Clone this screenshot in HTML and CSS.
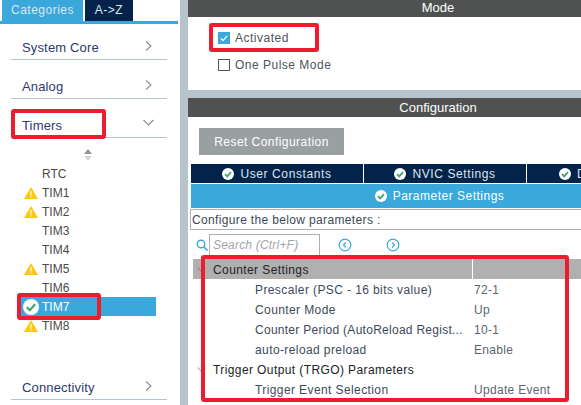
FILE: index.html
```html
<!DOCTYPE html>
<html lang="en">
<head>
    <meta charset="UTF-8">
    <title>Timers</title>
    <link rel="stylesheet" href="styles.css">
</head>
<body>
    <div class="app">
        <div class="sidebar">
            <div class="tabs">
                <div class="tab tab-active">Categories</div>
                <div class="tab">A-&gt;Z</div>
            </div>
            <div class="category cat-first">System Core
                <svg class="chev" width="7" height="10" viewBox="0 0 7 10"><path d="M1 .5l5 4.500-5 4.500" fill="none" stroke="#8a8f93" stroke-width="1.100"/></svg>
            </div>
            <div class="category">Analog
                <svg class="chev" width="7" height="10" viewBox="0 0 7 10"><path d="M1 .5l5 4.500-5 4.500" fill="none" stroke="#8a8f93" stroke-width="1.100"/></svg>
            </div>
            <div class="category">Timers
                <svg class="chev-down" width="11" height="7" viewBox="0 0 11 7"><path d="M.5 1l5 5 5-5" fill="none" stroke="#8a8f93" stroke-width="1.100"/></svg>
            </div>
            <div class="sort">
                <svg width="8" height="12" viewBox="0 0 8 12"><path d="M4 0l4 5H0z" fill="#8f9396"/><path d="M4 12L0 7h8z" fill="#d4d6d8"/></svg>
            </div>
            <ul class="timers">
                <li><span class="ico"></span>RTC</li>
                <li><span class="ico"><svg width="14" height="12" viewBox="0 0 14 12"><path d="M7 0l7 12H0z" fill="#fdc70c"/><path d="M6.400 4h1.200v4.400H6.400zM6.400 9.300h1.200v1.200H6.400z" fill="#fff"/></svg></span>TIM1</li>
                <li><span class="ico"><svg width="14" height="12" viewBox="0 0 14 12"><path d="M7 0l7 12H0z" fill="#fdc70c"/><path d="M6.400 4h1.200v4.400H6.400zM6.400 9.300h1.200v1.200H6.400z" fill="#fff"/></svg></span>TIM2</li>
                <li><span class="ico"></span>TIM3</li>
                <li><span class="ico"></span>TIM4</li>
                <li><span class="ico"><svg width="14" height="12" viewBox="0 0 14 12"><path d="M7 0l7 12H0z" fill="#fdc70c"/><path d="M6.400 4h1.200v4.400H6.400zM6.400 9.300h1.200v1.200H6.400z" fill="#fff"/></svg></span>TIM5</li>
                <li><span class="ico"></span>TIM6</li>
                <li class="selected"><span class="ico"><svg width="16" height="16" viewBox="0 0 16 16"><circle cx="8" cy="8" r="8" fill="#fff"/><path d="M3.800 8.200l3 3 5.400-6" fill="none" stroke="#3fa66e" stroke-width="2.200"/></svg></span>TIM7</li>
                <li><span class="ico"><svg width="14" height="12" viewBox="0 0 14 12"><path d="M7 0l7 12H0z" fill="#fdc70c"/><path d="M6.400 4h1.200v4.400H6.400zM6.400 9.300h1.200v1.200H6.400z" fill="#fff"/></svg></span>TIM8</li>
            </ul>
            <div class="category cat-last">Connectivity
                <svg class="chev" width="7" height="10" viewBox="0 0 7 10"><path d="M1 .5l5 4.500-5 4.500" fill="none" stroke="#8a8f93" stroke-width="1.100"/></svg>
            </div>
        </div>

        <div class="main">
            <div class="mode-panel">
                <div class="panel-title">Mode</div>
                <label class="check-row check-first"><span class="box box-on"><svg width="12" height="12" viewBox="0 0 14 14"><path d="M3.500 7.500l2.500 2.500 4.500-5.500" fill="none" stroke="#fff" stroke-width="1.500"/></svg></span>Activated</label>
                <label class="check-row"><span class="box"></span>One Pulse Mode</label>
            </div>
            <div class="config-panel">
                <div class="panel-title title-config">Configuration</div>
                <button class="reset">Reset Configuration</button>
                <div class="config-tabs">
                    <div class="ctab ctab-1"><svg class="ok" width="12" height="12" viewBox="0 0 12 12"><circle cx="6" cy="6" r="6" fill="#fff"/><path d="M3 6.200l2.200 2.200L9 4.200" fill="none" stroke="#3fa66e" stroke-width="1.800"/></svg>User Constants</div>
                    <div class="ctab ctab-2"><svg class="ok" width="12" height="12" viewBox="0 0 12 12"><circle cx="6" cy="6" r="6" fill="#fff"/><path d="M3 6.200l2.200 2.200L9 4.200" fill="none" stroke="#3fa66e" stroke-width="1.800"/></svg>NVIC Settings</div>
                    <div class="ctab ctab-3"><svg class="ok" width="12" height="12" viewBox="0 0 12 12"><circle cx="6" cy="6" r="6" fill="#fff"/><path d="M3 6.200l2.200 2.200L9 4.200" fill="none" stroke="#3fa66e" stroke-width="1.800"/></svg>DMA Settings</div>
                </div>
                <div class="param-tab"><svg class="ok" width="12" height="12" viewBox="0 0 12 12"><circle cx="6" cy="6" r="6" fill="#fff"/><path d="M3 6.200l2.200 2.200L9 4.200" fill="none" stroke="#3fa66e" stroke-width="1.800"/></svg>Parameter Settings</div>
                <div class="hint">Configure the below parameters :</div>
                <div class="search-row">
                    <svg class="lens" width="12" height="12" viewBox="0 0 12 12"><circle cx="5" cy="5" r="3.800" fill="none" stroke="#3aa8db" stroke-width="1.400"/><path d="M8 8l3.500 3.500" stroke="#3aa8db" stroke-width="1.600"/></svg>
                    <div class="search">Search (Ctrl+F)</div>
                    <svg class="nav" width="14" height="14" viewBox="0 0 14 14"><circle cx="7" cy="7" r="5.800" fill="none" stroke="#3aa8db" stroke-width="1.200"/><path d="M8 4.500L5.500 7 8 9.500" fill="none" stroke="#3aa8db" stroke-width="1.200"/></svg>
                    <svg class="nav nav-next" width="14" height="14" viewBox="0 0 14 14"><circle cx="7" cy="7" r="5.800" fill="none" stroke="#3aa8db" stroke-width="1.200"/><path d="M6 4.500L8.500 7 6 9.500" fill="none" stroke="#3aa8db" stroke-width="1.200"/></svg>
                </div>
                <div class="params">
                    <div class="row row-head"><div class="name name-group"><svg width="9" height="6" viewBox="0 0 9 6"><path d="M.5 .5l4 4 4-4" fill="none" stroke="#8d8d8d" stroke-width="1.100"/></svg>Counter Settings</div><div class="value"></div></div>
                    <div class="row"><div class="name sub">Prescaler (PSC - 16 bits value)</div><div class="value">72-1</div></div>
                    <div class="row"><div class="name sub">Counter Mode</div><div class="value">Up</div></div>
                    <div class="row"><div class="name sub name-cut">Counter Period (AutoReload Regist...</div><div class="value">10-1</div></div>
                    <div class="row"><div class="name sub">auto-reload preload</div><div class="value">Enable</div></div>
                    <div class="row row-group"><div class="name name-group"><svg width="9" height="6" viewBox="0 0 9 6"><path d="M.5 .5l4 4 4-4" fill="none" stroke="#b5b5b5" stroke-width="1.100"/></svg>Trigger Output (TRGO) Parameters</div><div class="value"></div></div>
                    <div class="row"><div class="name sub">Trigger Event Selection</div><div class="value">Update Event</div></div>
                </div>
            </div>
        </div>
    </div>

    <div class="mark mark-activated"></div>
    <div class="mark mark-timers"></div>
    <div class="mark mark-tim7"></div>
    <div class="mark mark-params"></div>
</body>
</html>
```

FILE: styles.css
```css
html, body {
    margin: 0;
    padding: 0;
    height: 405px;
    overflow: hidden;
}

body {
    font-family: "Liberation Sans", Arial, sans-serif;
    font-size: 12px;
    color: #3b4a5a;
    background: #fff;
    position: relative;
}

.app {
    display: flex;
    height: 405px;
    width: 581px;
}

/* left column */
.sidebar {
    width: 178px;
    margin-right: 2px;
    flex-shrink: 0;
    overflow: hidden;
}

.tabs {
    display: flex;
    gap: 2px;
    height: 21px;
    padding-left: 2px;
    border-bottom: 3px solid #3aa8db;
}

.tab {
    width: 48px;
    height: 21px;
    line-height: 21px;
    background: #03234b;
    color: #dfe6ec;
    text-align: center;
    font-size: 12px;
    letter-spacing: 0.5px;
}

.tab-active {
    width: 81px;
    background: #3aa8db;
}

.category {
    position: relative;
    height: 25px;
    line-height: 27px;
    margin: 13px 11px 0 11px;
    padding-left: 11px;
    border-bottom: 1px solid #b8c4cb;
    color: #2c3a6e;
    font-size: 13px;
    letter-spacing: 0.15px;
}

.cat-first {
    margin-top: 10px;
}

.cat-last {
    margin-top: 39px;
}

.chev {
    position: absolute;
    right: 15px;
    top: 7px;
}

.chev-down {
    position: absolute;
    right: 13px;
    top: 7px;
}

.sort {
    height: 12px;
    padding-left: 84px;
    margin-top: 11px;
}

.timers {
    list-style: none;
    margin: 3px 0 0 17px;
    padding: 0;
    width: 139px;
}

.timers li {
    display: flex;
    align-items: center;
    height: 19px;
    color: #4a4a4a;
    font-size: 12px;
}

.ico {
    width: 25px;
    padding-left: 7px;
    box-sizing: border-box;
    display: flex;
    align-items: center;
}

.timers .selected {
    background: #3aa8db;
    color: #fff;
}

.selected .ico {
    padding-left: 6px;
}

/* right column */
.main {
    flex: 1;
    background: #b8c4cb;
    padding-left: 8px;
    display: flex;
    flex-direction: column;
    gap: 8px;
    min-width: 0;
}

.mode-panel {
    height: 90px;
    background: #fff;
}

.config-panel {
    flex: 1;
    background: #fff;
    min-width: 0;
}

.panel-title {
    height: 17px;
    line-height: 15px;
    background: #505251;
    color: #fff;
    text-align: center;
    font-size: 13px;
    padding-left: 107px;
}

.title-config {
    height: 19px;
    line-height: 19px;
}

.check-row {
    display: flex;
    align-items: center;
    height: 16px;
    margin: 11px 0 0 30px;
    gap: 5px;
    color: #4a5560;
    font-size: 12px;
    letter-spacing: 0.5px;
}

.check-first {
    margin-top: 13px;
}

.box {
    width: 10px;
    height: 10px;
    border: 1px solid #555;
    flex-shrink: 0;
}

.box-on {
    width: 12px;
    height: 12px;
    border: 0;
    background: #3aa8db;
}

.reset {
    display: block;
    width: 145px;
    height: 27px;
    margin: 11px 0 0 11px;
    border: 0;
    padding: 0;
    background: #9a9fa2;
    color: #fff;
    font-family: inherit;
    font-size: 12px;
    letter-spacing: 0.45px;
}

.config-tabs {
    display: flex;
    gap: 1px;
    margin: 9px 0 0 3px;
    height: 19px;
    overflow: hidden;
}

.ctab {
    background: #03234b;
    color: #dfe6ec;
    display: flex;
    align-items: center;
    justify-content: center;
    gap: 6px;
    font-size: 12px;
    letter-spacing: 0.6px;
    flex-shrink: 0;
    white-space: nowrap;
}

.ctab-1 {
    width: 172px;
}

.ctab-2 {
    width: 162px;
}

.ctab-3 {
    width: 162px;
}

.ok {
    flex-shrink: 0;
}

.param-tab {
    display: flex;
    align-items: center;
    justify-content: center;
    gap: 6px;
    height: 24px;
    margin: 1px 0 0 3px;
    padding-left: 107px;
    background: #3aa8db;
    color: #fff;
    font-size: 12px;
    letter-spacing: 0.5px;
}

.hint {
    height: 19px;
    line-height: 20px;
    margin: 1px 0 0 2px;
    padding-left: 1px;
    border: 1px solid #aab0b5;
    border-right: 0;
    color: #3b4a5a;
    font-size: 12px;
    letter-spacing: 0.35px;
}

.search-row {
    display: flex;
    align-items: center;
    height: 21px;
    margin-top: 4px;
    padding-left: 8px;
}

.search {
    width: 111px;
    height: 21px;
    line-height: 21px;
    border: 1px solid #aab0b5;
    border-bottom: 0;
    margin-left: 1px;
    padding-left: 3px;
    box-sizing: border-box;
    color: #a0a4a8;
    font-style: italic;
    font-size: 12px;
    letter-spacing: 0.2px;
}

.nav {
    margin-left: 18px;
}

.nav-next {
    margin-left: 34px;
}

.params {
    margin: 4px 0 0 5px;
}

.row {
    display: flex;
    height: 20px;
    line-height: 20px;
    color: #3b4a5a;
    font-size: 12px;
    letter-spacing: 0.4px;
}

.row-head {
    background: #b0b0b0;
    color: #222;
}

.row-group {
    color: #222;
}

.name {
    width: 280px;
    height: 20px;
    box-sizing: border-box;
    padding-top: 1px;
    flex-shrink: 0;
    white-space: nowrap;
}

.name-group {
    display: flex;
    align-items: center;
    gap: 7px;
    padding-left: 4px;
}

.row-head .name {
    border-right: 1px solid #fff;
}

.name.sub {
    padding-left: 62px;
}

.name-cut {
    letter-spacing: 0.27px;
}

.value {
    padding: 1px 0 0 1px;
    color: #5a6570;
    letter-spacing: 0.3px;
}

/* red annotation boxes drawn over the screenshot */
.mark {
    position: absolute;
    border: 4px solid #ed1c2e;
    border-radius: 3px;
    box-sizing: border-box;
}

.mark-activated {
    left: 209px;
    top: 23px;
    width: 110px;
    height: 29px;
}

.mark-timers {
    left: 11px;
    top: 109px;
    width: 95px;
    height: 30px;
}

.mark-tim7 {
    left: 17px;
    top: 293px;
    width: 84px;
    height: 27px;
}

.mark-params {
    left: 201px;
    top: 255px;
    width: 368px;
    height: 147px;
}
```
